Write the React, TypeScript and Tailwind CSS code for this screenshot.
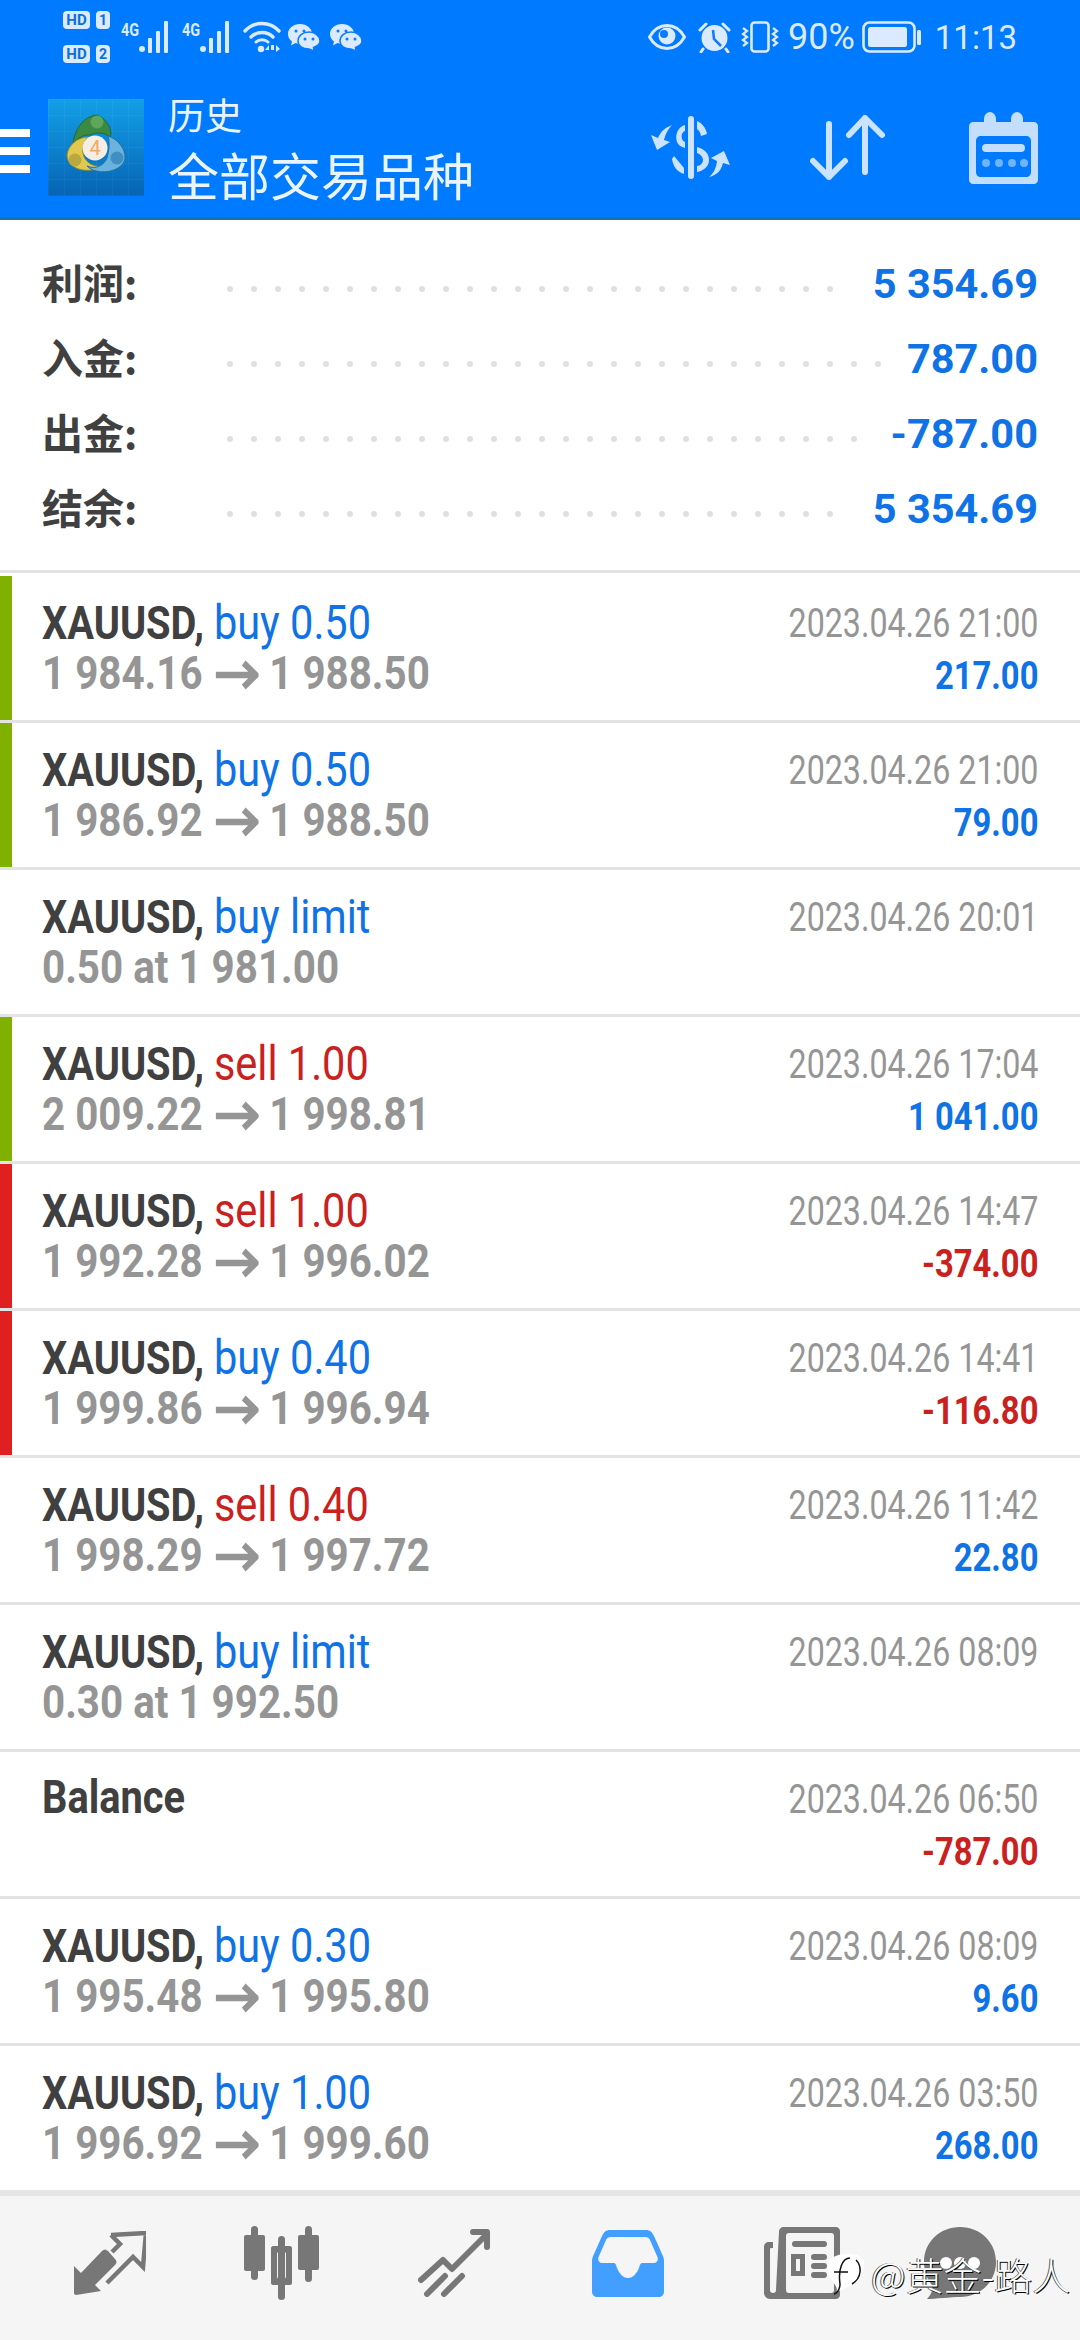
import React from "react";

const C = "#dbeaff";

function HD({ n }: { n: string }) {
  return (
    <div className="flex items-center gap-[6px] h-[18px]">
      <span className="h-[18px] w-[27px] rounded-[4px] bg-[#dbeaff] text-[#0a6fe0] text-[15px] leading-[18px] font-bold text-center font-['Roboto',sans-serif]">HD</span>
      <span className="h-[18px] w-[14px] rounded-[4px] bg-[#dbeaff] text-[#0a6fe0] text-[14px] leading-[18px] font-bold text-center font-['Roboto',sans-serif]">{n}</span>
    </div>
  );
}

function Signal() {
  return (
    <div className="relative w-[51px] h-[32px]">
      <span className="absolute left-0 top-[1px] text-[18px] leading-[16px] font-bold text-[#dbeaff] font-['Roboto',sans-serif] scale-x-[.8] origin-left">4G</span>
      <svg className="absolute left-[18px] top-0" width="33" height="32" viewBox="0 0 33 32" fill={C}>
        <circle cx="3" cy="28" r="3" />
        <rect x="9" y="17" width="4" height="15" rx="1" />
        <rect x="17" y="10" width="4" height="22" rx="1" />
        <rect x="25" y="0" width="4" height="32" rx="1" />
      </svg>
    </div>
  );
}

function Wifi() {
  return (
    <svg width="38" height="32" viewBox="0 0 38 32" fill="none" stroke={C} strokeLinecap="round">
      <path d="M2 10C11 0 27 0 36 10" strokeWidth="3.4" />
      <path d="M8 16C14 10 24 10 30 16" strokeWidth="3.4" />
      <path d="M13 21C16 18 22 18 25 21" strokeWidth="3" />
      <circle cx="18" cy="28" r="3.2" fill={C} stroke="none" />
      <path d="M26 24L22 29H26ZM31 24V29H28V24ZM33 24L37 28L33 31Z" fill={C} stroke="none" />
    </svg>
  );
}

function WeChat() {
  return (
    <svg width="32" height="27" viewBox="0 0 32 27">
      <path d="M12 0C5 0 0 4.500 0 10C0 13 1.500 15.500 4 17.500L3 21.500L7.500 19C9 19.500 10.500 20 12 20C19 20 24 15.500 24 10C24 4.500 19 0 12 0Z" fill={C} />
      <path d="M21 8C14.500 8 10 12 10 17C10 22 14.500 25 21 25L26 27L25.500 23.500C29.500 22 32 20 32 17C32 12 27 8 21 8Z" fill={C} stroke="#0a7bff" strokeWidth="1.500" />
      <circle cx="8" cy="7" r="1.500" fill="#0a7bff" />
      <circle cx="16" cy="7" r="1.500" fill="#0a7bff" />
      <circle cx="17" cy="15" r="1.500" fill="#0a7bff" />
      <circle cx="25" cy="15" r="1.500" fill="#0a7bff" />
    </svg>
  );
}

function Eye() {
  return (
    <svg width="38" height="26" viewBox="0 0 38 26">
      <path d="M1.500 13C6 5 12 1.500 19 1.500C26 1.500 32 5 36.500 13C32 21 26 24.500 19 24.500C12 24.500 6 21 1.500 13Z" fill="none" stroke={C} strokeWidth="3" />
      <circle cx="19" cy="12" r="8.500" fill={C} />
      <circle cx="16" cy="10" r="4" fill="#0a7bff" />
    </svg>
  );
}

function Alarm() {
  return (
    <svg width="33" height="31" viewBox="0 0 33 31">
      <circle cx="16.500" cy="16" r="13" fill={C} />
      <path d="M2 8L8 2M31 8L25 2" stroke={C} strokeWidth="3" strokeLinecap="round" />
      <path d="M5 27L3 30M28 27L30 30" stroke={C} strokeWidth="3" strokeLinecap="round" />
      <path d="M15 8L16 17L23 24" fill="none" stroke="#0a7bff" strokeWidth="2.500" />
    </svg>
  );
}

function Vibrate() {
  return (
    <svg width="38" height="32" viewBox="0 0 38 32" fill="none" stroke={C}>
      <rect x="10.500" y="1.500" width="17" height="29" rx="3" strokeWidth="2.600" />
      <path d="M2 7L6 10L2 13L6 16L2 19L6 22L2 25" strokeWidth="2.200" />
      <path d="M32 7L36 10L32 13L36 16L32 19L36 22L32 25" strokeWidth="2.200" />
    </svg>
  );
}

function Battery() {
  return (
    <svg width="59" height="32" viewBox="0 0 59 32">
      <rect x="1.500" y="1.500" width="51" height="29" rx="6" fill="none" stroke={C} strokeWidth="2.600" />
      <rect x="6" y="6" width="39" height="20" rx="2.500" fill={C} />
      <rect x="55" y="9" width="4" height="15" rx="1.500" fill={C} />
    </svg>
  );
}

function MT4Logo() {
  return (
    <svg width="96" height="97" viewBox="0 0 96 97" className="shrink-0">
      <defs>
        <linearGradient id="mtbg" x1="0" y1="0" x2="0" y2="1">
          <stop offset="0" stopColor="#139fe6" />
          <stop offset="1" stopColor="#0664b4" />
        </linearGradient>
        <pattern id="mtgrid" width="16" height="16" patternUnits="userSpaceOnUse">
          <path d="M16 0H0V16" fill="none" stroke="#ffffff" strokeOpacity=".08" strokeWidth="1" />
        </pattern>
      </defs>
      <rect width="96" height="97" fill="url(#mtbg)" />
      <rect width="96" height="97" fill="url(#mtgrid)" />
      <path d="M49 16C37 17 27 28 25 45C31 38 37 35 42 36C48 33 56 33 62 38C65 33 60 20 49 16Z" fill="#3b8a42" stroke="#1d6a3c" strokeWidth="1" />
      <path d="M40 38C30 38 20 46 19 56C19 66 30 73 44 71C48 70 50 69 52 67C44 68 36 62 35 54C34 48 36 42 40 38Z" fill="#e3c84e" stroke="#8f8a2c" strokeWidth="1" />
      <path d="M60 37C70 40 78 50 77 60C75 70 60 75 48 72C44 71 41 69 39 67C48 71 56 66 59 59C61 51 62 44 60 37Z" fill="#6bb2dc" stroke="#1e6fa6" strokeWidth="1" />
      <circle cx="49" cy="23" r="6.500" fill="#5fa55a" />
      <circle cx="27" cy="61" r="6.500" fill="#b8a83e" />
      <circle cx="69" cy="59" r="6.500" fill="#3f8fc4" />
      <circle cx="47" cy="49" r="12.500" fill="#f6eee4" />
      <text x="47" y="56" textAnchor="middle" fontSize="20" fill="#efab62" fontFamily="Roboto, sans-serif">4</text>
    </svg>
  );
}

function DollarIcon() {
  return (
    <svg width="80" height="63" viewBox="0 0 80 63" fill="#cbe3ff">
      <rect x="37" y="0" width="6" height="63" rx="3" />
      <path d="M34 9C26 11 24 20 26 26C27 29 30 31 34 32L34 26C31 25 30 21 31 18C32 16 33 15 34 15Z" />
      <path d="M46 5C51 7 55 12 56 18L50 20C49 16 48 14 46 13Z" />
      <path d="M46 31C54 33 58 38 58 44C58 51 52 55 46 56V50C49 50 52 47 52 44C52 41 49 38 46 37Z" />
      <path d="M23 40L33 52L33 58C26 56 22 50 21 43Z" />
      <path d="M21 9C14 12 10 15 7 22L0 19L6 34L19 26L13 24C14 20 16 14 21 9Z" />
      <path d="M58 61C66 59 70 55 72 47L79 49L73 35L60 42L66 45C65 52 63 57 58 61Z" />
    </svg>
  );
}

function SortIcon() {
  return (
    <svg width="76" height="66" viewBox="0 0 76 66" fill="none" stroke="#cbe3ff" strokeWidth="6" strokeLinecap="round" strokeLinejoin="round">
      <path d="M19 9V62M3 46L19 62L35 46" />
      <path d="M55 57V3M39 20L55 3L72 20" />
    </svg>
  );
}

function CalIcon() {
  return (
    <svg width="69" height="72" viewBox="0 0 69 72">
      <path
        fillRule="evenodd"
        fill="#c4dffd"
        d="M4 10H15V7C15 3 18 0 21 0C24 0 27 3 27 7V10H42V7C42 3 45 0 48 0C51 0 54 3 54 7V10H65C67 10 69 12 69 14V68C69 70 67 72 65 72H4C2 72 0 70 0 68V14C0 12 2 10 4 10ZM12 24C9 24 7 26 7 29V60C7 63 9 65 12 65H57C60 65 62 63 62 60V29C62 26 60 24 57 24Z"
      />
      <rect x="13" y="32" width="43" height="8" rx="4" fill="#c4dffd" />
      <g fill="#6fb3fb">
        <circle cx="17" cy="51" r="4" />
        <circle cx="30" cy="51" r="4" />
        <circle cx="43" cy="51" r="4" />
        <circle cx="55" cy="51" r="4" />
      </g>
    </svg>
  );
}

const G = "#777777";

function NavTrade() {
  return (
    <svg width="72" height="64" viewBox="0 0 72 64" className="shrink-0">
      <path d="M0 35L7 42L28 20C30 18 32 18 34 20L41 28C43 30 43 32 41 34L21 54L27 60L2 64C1 64 0 63 0 62Z" fill={G} />
      <path d="M37 4L72 2L69 36L59 26L33 52M37 4L46 13L38 21" fill="none" stroke={G} strokeWidth="4.500" />
    </svg>
  );
}

function NavCandles() {
  return (
    <svg width="75" height="74" viewBox="0 0 75 74" className="shrink-0" fill={G}>
      <rect x="7" y="0" width="7" height="54" rx="3.500" />
      <rect x="0" y="9" width="21" height="36" rx="2" />
      <rect x="34" y="10" width="7" height="64" rx="3.500" />
      <path fillRule="evenodd" d="M29 20H46C47 20 48 21 48 22V57C48 58 47 59 46 59H29C28 59 27 58 27 57V22C27 21 28 20 29 20ZM35 26C33 26 33 27 33 28V50C33 52 34 53 35 53H40C41 53 42 52 42 50V28C42 27 42 26 40 26Z" />
      <rect x="61" y="0" width="7" height="56" rx="3.500" />
      <rect x="54" y="9" width="21" height="35" rx="2" />
    </svg>
  );
}

function NavChart() {
  return (
    <svg width="72" height="68" viewBox="0 0 72 68" className="shrink-0" fill="none" stroke={G} strokeWidth="6" strokeLinecap="round" strokeLinejoin="round">
      <path d="M3 51L25 31L34 40L68 6" />
      <path d="M55 3H69V18" />
      <path d="M9 65L27 47M26 65L44 47" />
    </svg>
  );
}

function NavTray() {
  return (
    <svg width="72" height="67" viewBox="0 0 72 67" className="shrink-0">
      <path
        fill="#429eff"
        fillRule="evenodd"
        d="M18 0H54C58 0 60 2 62 6L70 24C71 26 72 28 72 31V61C72 65 70 67 66 67H6C2 67 0 65 0 61V31C0 28 1 26 2 24L10 6C12 2 14 0 18 0ZM19 7C16 7 15 8 14 10L7 26C5 30 7 33 10 33H21C24 33 24 35 25 38C27 43 31 48 36 48C41 48 45 43 47 38C48 35 48 33 51 33H62C65 33 67 30 65 26L58 10C57 8 56 7 53 7Z"
      />
    </svg>
  );
}

function NavNews() {
  return (
    <svg width="76" height="72" viewBox="0 0 76 72" className="shrink-0" fill={G}>
      <path fillRule="evenodd" d="M20 0H72C74 0 76 2 76 4V68C76 70 74 72 72 72H6C3 72 0 69 0 66V20C0 17 2 15 5 15H9V21H7C6 21 6 22 6 23V63C6 65 7 66 9 66C11 66 12 65 12 63L15 5C15 2 17 0 20 0ZM25 6C23 6 22 7 22 9V63C22 65 23 66 25 66H67C69 66 70 65 70 63V9C70 7 69 6 67 6Z" />
      <rect x="28" y="14" width="35" height="6" rx="3" />
      <path fillRule="evenodd" d="M27 27H41V49H27ZM32 32V44H36V32Z" />
      <rect x="47" y="27" width="16" height="6" rx="3" />
      <rect x="47" y="36" width="16" height="6" rx="3" />
      <rect x="47" y="45" width="16" height="6" rx="3" />
    </svg>
  );
}

function NavChat() {
  return (
    <svg width="72" height="72" viewBox="0 0 72 72" className="shrink-0" fill={G}>
      <path d="M36 0C56 0 72 15 72 35C72 55 56 70 36 70C28 70 10 72 3 72C8 67 9 62 8 58C3 52 0 44 0 35C0 15 16 0 36 0Z" />
      <circle cx="22" cy="36" r="6" fill="#fff" />
      <circle cx="36" cy="36" r="6" fill="#fff" />
      <circle cx="50" cy="36" r="6" fill="#fff" />
    </svg>
  );
}

const Arrow = () => (
  <svg width="49" height="30" viewBox="0 0 49 30" className="inline-block ml-[15px] mr-[12px] align-[-1px]">
    <path d="M0 15H45M32 3L46 15L32 27" fill="none" stroke="#959595" strokeWidth="6.500" />
  </svg>
);

type Row = {
  side: string;
  sideColor: "blue" | "red";
  a?: string;
  b?: string;
  sub?: string;
  time: string;
  val?: string;
  valRed?: boolean;
  bar?: "green" | "red";
  balance?: boolean;
};

const rows: Row[] = [
  { side: "buy 0.50", sideColor: "blue", a: "1 984.16", b: "1 988.50", time: "21:00", val: "217.00", bar: "green" },
  { side: "buy 0.50", sideColor: "blue", a: "1 986.92", b: "1 988.50", time: "21:00", val: "79.00", bar: "green" },
  { side: "buy limit", sideColor: "blue", sub: "0.50 at 1 981.00", time: "20:01" },
  { side: "sell 1.00", sideColor: "red", a: "2 009.22", b: "1 998.81", time: "17:04", val: "1 041.00", bar: "green" },
  { side: "sell 1.00", sideColor: "red", a: "1 992.28", b: "1 996.02", time: "14:47", val: "-374.00", valRed: true, bar: "red" },
  { side: "buy 0.40", sideColor: "blue", a: "1 999.86", b: "1 996.94", time: "14:41", val: "-116.80", valRed: true, bar: "red" },
  { side: "sell 0.40", sideColor: "red", a: "1 998.29", b: "1 997.72", time: "11:42", val: "22.80" },
  { side: "buy limit", sideColor: "blue", sub: "0.30 at 1 992.50", time: "08:09" },
  { side: "", sideColor: "blue", balance: true, time: "06:50", val: "-787.00", valRed: true },
  { side: "buy 0.30", sideColor: "blue", a: "1 995.48", b: "1 995.80", time: "08:09", val: "9.60" },
  { side: "buy 1.00", sideColor: "blue", a: "1 996.92", b: "1 999.60", time: "03:50", val: "268.00" },
];

const summary = [
  { label: "利润:", value: "5 354.69", dots: 26 },
  { label: "入金:", value: "787.00", dots: 28 },
  { label: "出金:", value: "-787.00", dots: 27 },
  { label: "结余:", value: "5 354.69", dots: 26 },
];

function TradeRow({ r }: { r: Row }) {
  return (
    <div className="flex h-[147px] border-b-[3px] border-[#e3e3e3] last:h-[144px] last:border-b-0">
      <div className="w-[12px] shrink-0">
        {r.bar && <div className={`h-full w-full ${r.bar === "green" ? "bg-[#80b000]" : "bg-[#e02020]"}`} />}
      </div>
      <div className="flex flex-1 justify-between pl-[30px] pr-[42px] pt-[21px]">
        <div className="font-['Roboto',sans-serif] whitespace-nowrap">
          <div className="h-[51px] text-[46px] leading-[51px] origin-left scale-x-[.865]">
            {r.balance ? (
              <span className="font-bold text-[#404040] relative -top-[1px]">Balance</span>
            ) : (
              <>
                <span className="font-bold text-[#404040]">XAUUSD,</span>{" "}
                <span className={`text-[48px] ${r.sideColor === "blue" ? "text-[#0f72e5]" : "text-[#c9211e]"}`}>{r.side}</span>
              </>
            )}
          </div>
          {(r.a || r.sub) && (
            <div className="h-[51px] text-[46px] leading-[51px] font-bold text-[#959595] origin-left scale-x-[.877]">
              {r.sub ? (
                r.sub
              ) : (
                <>
                  {r.a}
                  <Arrow />
                  {r.b}
                </>
              )}
            </div>
          )}
        </div>
        <div className="font-['Roboto',sans-serif] whitespace-nowrap text-right pt-[1px]">
          <div className="h-[53px] text-[40px] leading-[51px] text-[#959595] origin-right scale-x-[.805]">2023.04.26 {r.time}</div>
          {r.val && (
            <div className={`h-[51px] text-[39px] leading-[51px] font-bold origin-right scale-x-[.84] ${r.valRed ? "text-[#c9211e]" : "text-[#0f72e5]"}`}>
              {r.val}
            </div>
          )}
        </div>
      </div>
    </div>
  );
}

export default function App() {
  return (
    <div className="w-[1080px] h-[2340px] relative overflow-hidden bg-white flex flex-col">
      <header className="h-[220px] bg-[#007aff] border-b-[3px] border-[#1a72a8] shrink-0">
        <div className="h-[74px] flex items-center pl-[63px] pr-[63px] text-[#dbeaff] font-['Roboto',sans-serif]">
          <div className="flex flex-col gap-[16px] w-[58px]">
            <HD n="1" />
            <HD n="2" />
          </div>
          <Signal />
          <div className="ml-[10px]"><Signal /></div>
          <div className="ml-[10px]"><Wifi /></div>
          <div className="ml-[7px]"><WeChat /></div>
          <div className="ml-[10px]"><WeChat /></div>
          <div className="ml-auto"><Eye /></div>
          <div className="ml-[12px]"><Alarm /></div>
          <div className="ml-[10px]"><Vibrate /></div>
          <span className="ml-[9px] text-[36px] leading-none">90%</span>
          <div className="ml-[7px]"><Battery /></div>
          <span className="ml-[14px] text-[33px] leading-none">11:13</span>
        </div>
        <div className="h-[143px] flex items-center pt-[4px]">
          <div className="w-[30px] flex flex-col gap-[10px] mt-[6px]">
            <div className="h-[8px] bg-white" />
            <div className="h-[8px] bg-white" />
            <div className="h-[8px] bg-white" />
          </div>
          <div className="ml-[18px]"><MT4Logo /></div>
          <div className="ml-[24px] -mt-[3px] text-[#eaf4ff] font-['Noto_Sans_CJK_SC',sans-serif] whitespace-nowrap">
            <div className="text-[37px] leading-[56px]">历史</div>
            <div className="text-[51px] leading-[64px]">全部交易品种</div>
          </div>
          <div className="ml-auto flex items-center pr-[42px]">
            <DollarIcon />
            <div className="ml-[79px]"><SortIcon /></div>
            <div className="ml-[83px]"><CalIcon /></div>
          </div>
        </div>
      </header>

      <section className="h-[353px] shrink-0 pt-[27px] pl-[42px] pr-[42px] border-b-[3px] border-[#e3e3e3]">
        {summary.map((s) => (
          <div key={s.label} className="h-[75px] flex items-center">
            <span className="w-[185px] shrink-0 text-[41px] font-bold leading-none -mt-[7px] text-[#404040] font-['Noto_Sans_CJK_SC',sans-serif]">{s.label}</span>
            <div className="flex gap-[18px] mt-[8px]">
              {Array.from({ length: s.dots }).map((_, i) => (
                <span key={i} className="w-[6px] h-[6px] rounded-full bg-[#e0e0e0]" />
              ))}
            </div>
            <span className="ml-auto text-[41.5px] font-bold leading-none -mt-[2px] text-[#0f72e5] font-['Roboto',sans-serif]">{s.value}</span>
          </div>
        ))}
      </section>

      <main className="shrink-0 pt-[3px]">
        {rows.map((r, i) => (
          <TradeRow key={i} r={r} />
        ))}
      </main>

      <footer className="flex-1 bg-[#f5f5f5] border-t-[6px] border-[#e5e5e5] flex items-center pl-[74px] pb-[10px]">
        <NavTrade />
        <div className="ml-[98px]"><NavCandles /></div>
        <div className="ml-[99px]"><NavChart /></div>
        <div className="ml-[102px]"><NavTray /></div>
        <div className="ml-[100px]"><NavNews /></div>
        <div className="ml-[84px]"><NavChat /></div>
      </footer>

      <div className="absolute left-[826px] top-[2252px] flex items-center">
        <svg width="40" height="44" viewBox="0 0 40 44">
          <path d="M6 6C14 0 34 0 38 8C40 20 32 30 20 36L10 40C14 34 2 28 2 18C2 12 3 8 6 6Z" fill="#fff" />
          <path d="M30 8C36 14 36 26 26 32M24 6C16 6 12 18 14 32C14 38 10 42 8 42M8 20H22" fill="none" stroke="#111" strokeWidth="1.500" />
        </svg>
        <span className="ml-[5px] text-[38px] leading-none text-white font-['Noto_Sans_CJK_SC',sans-serif] font-light whitespace-nowrap [text-shadow:1px_1px_0_#000,-1px_0_0_#555]">@黄金-路人</span>
      </div>
    </div>
  );
}
